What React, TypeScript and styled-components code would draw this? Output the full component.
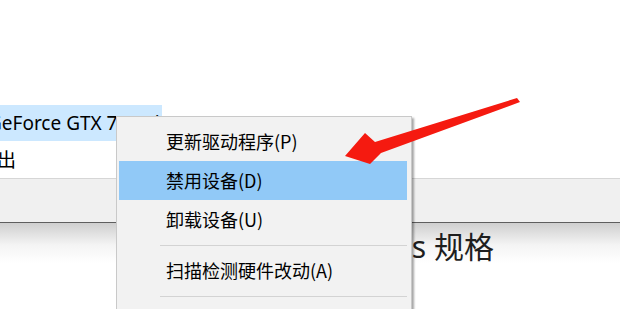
import React from "react";
import styled, { createGlobalStyle } from "styled-components";

const GlobalStyle = createGlobalStyle`
  html, body {
    margin: 0;
    padding: 0;
    background: #ffffff;
  }
`;

const Screen = styled.div`
  position: relative;
  width: 620px;
  height: 309px;
  overflow: hidden;
  background: #ffffff;
  font-family: "Noto Sans", "Noto Sans CJK SC", sans-serif;
  color: #000000;
`;

const Tree = styled.div`
  display: flex;
  flex-direction: column;
  padding-top: 105px;
`;

const TreeRow = styled.div`
  display: flex;
  align-items: center;
  height: 36px;
  overflow: hidden;
`;

const TreeLabel = styled.span<{ $selected?: boolean; $shift: number }>`
  display: inline-flex;
  align-items: center;
  height: 100%;
  margin-left: ${(p) => p.$shift}px;
  padding-right: 2px;
  font-size: 19px;
  white-space: nowrap;
  background: ${(p) => (p.$selected ? "#cce8ff" : "transparent")};
`;

const HeaderBar = styled.div`
  height: 43px;
  margin-top: 1px;
  background: #f0f0f0;
  border-top: 1px solid #d6d6d6;
  border-bottom: 1px solid #5e5e5e;
`;

const SpecSection = styled.div`
  height: 90px;
  padding: 6px 0 0 298px;
  background: linear-gradient(#cfcfcf 0px, #f4f4f4 22px, #ffffff 40px);
`;

const SpecTitle = styled.div`
  font-family: "Noto Sans", "Noto Sans CJK SC", sans-serif;
  font-size: 30px;
  line-height: 36px;
  color: #1e1e1e;
  white-space: nowrap;
`;

const Menu = styled.div`
  position: absolute;
  left: 116px;
  top: 116px;
  width: 296px;
  box-sizing: border-box;
  padding: 5px 4px 5px 2px;
  background: #f2f2f2;
  border: 1px solid #c9c9c9;
  box-shadow: 2px 2px 2px rgba(0, 0, 0, 0.35);
  font-family: "Noto Sans CJK SC", "Noto Sans", sans-serif;
`;

const MenuItem = styled.div<{ $active?: boolean }>`
  height: 39px;
  line-height: 39px;
  padding-left: 47px;
  font-size: 18px;
  color: #000000;
  white-space: nowrap;
  background: ${(p) => (p.$active ? "#91c9f7" : "transparent")};
`;

const Separator = styled.div`
  height: 1px;
  margin: 6px 0 5px 41px;
  background: #d3d3d3;
`;

const Arrow = styled.svg`
  position: absolute;
  left: 0;
  top: 0;
  pointer-events: none;
`;

export default function App() {
  return (
    <>
      <GlobalStyle />
      <Screen>
        <Tree>
          <TreeRow>
            <TreeLabel $selected $shift={-12}>
              GeForce GTX 750 Ti
            </TreeLabel>
          </TreeRow>
          <TreeRow>
            <TreeLabel $shift={-117}>音频输入和输出</TreeLabel>
          </TreeRow>
          <HeaderBar />
          <SpecSection>
            <SpecTitle>Windows 规格</SpecTitle>
          </SpecSection>
        </Tree>

        <Menu>
          <MenuItem>更新驱动程序(P)</MenuItem>
          <MenuItem $active>禁用设备(D)</MenuItem>
          <MenuItem>卸载设备(U)</MenuItem>
          <Separator />
          <MenuItem>扫描检测硬件改动(A)</MenuItem>
          <Separator />
          <MenuItem>属性(R)</MenuItem>
        </Menu>

        <Arrow width="620" height="309" viewBox="0 0 620 309">
          <polygon
            points="517,98 520,102 381,153 370,164 345,156 365,133 375,142"
            fill="#f51a10"
          />
        </Arrow>
      </Screen>
    </>
  );
}
